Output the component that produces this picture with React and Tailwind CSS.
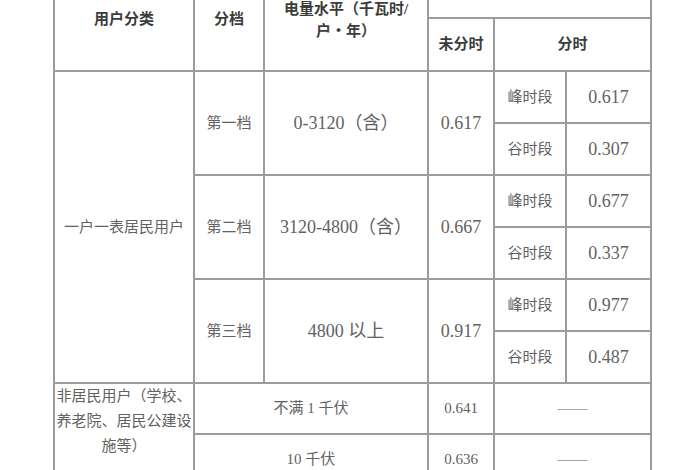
// App.jsx
import React from "react";

const cjk = { fontFamily: '"Liberation Serif", "Noto Sans CJK SC", serif' };

const tiers = [
  { name: "第一档", range: "0-3120（含）", flat: "0.617", peak: "0.617", valley: "0.307" },
  { name: "第二档", range: "3120-4800（含）", flat: "0.667", peak: "0.677", valley: "0.337" },
  { name: "第三档", range: "4800 以上", flat: "0.917", peak: "0.977", valley: "0.487" },
];

export default function App() {
  const td = "border-2 border-[#9c9c9c] p-0 text-center align-middle";
  const th = "border-2 border-[#9c9c9c] p-0 text-center align-middle font-bold text-[#3c3c3c]";

  return (
    <div className="w-[700px] h-[470px] overflow-hidden bg-white" style={cjk}>
      <table className="table-fixed border-collapse ml-[53px] -mt-[34px] text-[15px] text-[#626262]">
        <colgroup>
          <col className="w-[140px]" />
          <col className="w-[70px]" />
          <col className="w-[164px]" />
          <col className="w-[66px]" />
          <col className="w-[72px]" />
          <col className="w-[85px]" />
        </colgroup>
        <tbody>
          <tr className="h-[51px]">
            <th rowSpan={2} className={th}>用户分类</th>
            <th rowSpan={2} className={th}>分档</th>
            <th rowSpan={2} className={`${th} leading-[22px] pt-[2px]`}>
              电量水平（千瓦时/
              <br />
              户・年）
            </th>
            <th colSpan={3} className={`${th} align-bottom pb-[14px] text-[#cdcdcd] font-normal`}>
              电价（元/千瓦时）
            </th>
          </tr>
          <tr className="h-[53px]">
            <th className={th}>未分时</th>
            <th colSpan={2} className={th}>分时</th>
          </tr>

          {tiers.map((t, i) => (
            <React.Fragment key={t.name}>
              <tr className="h-[52px]">
                {i === 0 && (
                  <td rowSpan={6} className={td}>一户一表居民用户</td>
                )}
                <td rowSpan={2} className={td}>{t.name}</td>
                <td rowSpan={2} className={`${td} text-[18px]`}>{t.range}</td>
                <td rowSpan={2} className={`${td} text-[18px]`}>{t.flat}</td>
                <td className={td}>峰时段</td>
                <td className={`${td} text-[18px]`}>{t.peak}</td>
              </tr>
              <tr className="h-[52px]">
                <td className={td}>谷时段</td>
                <td className={`${td} text-[18px]`}>{t.valley}</td>
              </tr>
            </React.Fragment>
          ))}

          <tr className="h-[51px]">
            <td rowSpan={2} className={`${td} align-top leading-[25px]`}>
              非居民用户（学校、
              <br />
              养老院、居民公建设
              <br />
              施等）
            </td>
            <td colSpan={2} className={td}>不满 1 千伏</td>
            <td className={td}>0.641</td>
            <td colSpan={2} className={td}>——</td>
          </tr>
          <tr className="h-[51px]">
            <td colSpan={2} className={td}>10 千伏</td>
            <td className={td}>0.636</td>
            <td colSpan={2} className={td}>——</td>
          </tr>
        </tbody>
      </table>
    </div>
  );
}
